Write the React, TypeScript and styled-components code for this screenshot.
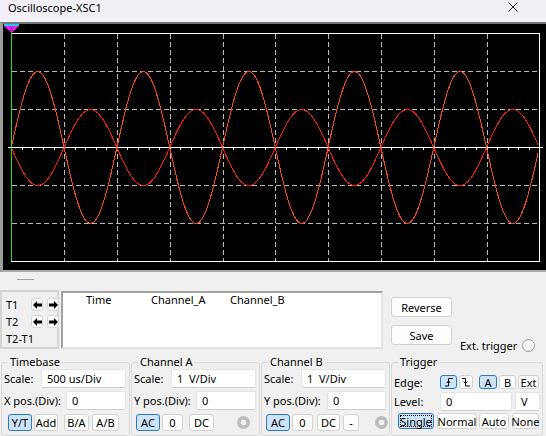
import React from 'react';
import styled, { createGlobalStyle } from 'styled-components';

// === GLOBAL ===
const GlobalStyle = createGlobalStyle`
  html, body { margin: 0; padding: 0; background: #f0f0f0; }
  body { font-family: "Noto Sans", "Liberation Sans", sans-serif; font-size: 11px; color: #000; }
`;

// === STYLED COMPONENTS ===
const Window = styled.div`
  width: 546px; height: 436px; overflow: hidden;
  display: flex; flex-direction: column; background: #f0f0f0;
`;
const TitleBar = styled.div`
  height: 22px; flex-shrink: 0; background: #f2eff6;
  display: flex; align-items: flex-start; justify-content: space-between;
  padding: 0 28px 0 8px; box-sizing: border-box; line-height: 15px; font-size: 11px;
`;
const CloseIcon = styled.svg` margin-top: 2px; `;
const Screen = styled.div`
  height: 250px; flex-shrink: 0; box-sizing: border-box; background: #000;
  border-top: 2px solid #767676; border-left: 3px solid #9c9c9c;
  border-bottom: 2px solid #a9a9a9;
  svg { display: block; }
`;
const Panel = styled.div` flex: 1; padding-top: 7px; `;
const Handle = styled.div` margin-left: 17px; width: 17px; height: 1px; background: #a0a0a0; margin-bottom: 10px; `;
const TopRow = styled.div` display: flex; align-items: flex-start; height: 59px; `;
const CursorBox = styled.div`
  box-sizing: border-box; width: 59px; height: 59px;
  border: 2px solid #d4d4d4; padding: 6px 0 0 4px;
  display: grid; grid-template-columns: 21px 12px 12px; grid-template-rows: 13px 13px 14px;
  column-gap: 4px; row-gap: 4px; align-items: center;
`;
const CursorLabel = styled.span<{ $span?: boolean }>`
  line-height: 14px; ${p => p.$span ? 'grid-column: 1 / span 3;' : ''}
`;
const ArrowBtn = styled.div`
  box-sizing: border-box; width: 12px; height: 13px; background: #fdfdfd;
  border: 1px solid #d6d6d6; border-radius: 3px;
  display: flex; align-items: center; justify-content: center;
`;
const Table = styled.div`
  box-sizing: border-box; width: 322px; height: 58px; margin-left: 2px; margin-top: 1px;
  background: #fff; border: 2px solid; border-color: #a3a3a3 #e3e3e3 #e3e3e3 #a3a3a3;
  display: grid; grid-template-columns: 65px 79px auto; align-content: start;
  padding-left: 23px; line-height: 13px;
`;
const SideButtons = styled.div`
  display: flex; flex-direction: column; gap: 8px; margin-left: 8px; padding-top: 7px;
`;
const ExtTrigger = styled.div`
  display: flex; align-items: center; gap: 5px; margin-left: 8px; margin-top: 49px; height: 13px;
`;
const Radio = styled.div`
  box-sizing: border-box; width: 13px; height: 13px; border-radius: 50%;
  border: 1px solid #9a9a9a; background: #f6f6f6;
`;
const DimRadio = styled.div<{ $ml: number }>`
  width: 13px; height: 13px; border-radius: 50%; margin-left: ${p => p.$ml}px; flex-shrink: 0;
  background: radial-gradient(circle, #f2f2f2 0 2.5px, #bcbcbc 3.2px);
`;
const GroupRow = styled.div` display: flex; gap: 1px; padding-left: 1px; margin-top: 6px; `;
const Group = styled.fieldset<{ $w: number }>`
  box-sizing: border-box; width: ${p => p.$w}px; height: 81px; min-width: 0;
  margin: 0; padding: 0 0 0 2px; border: 1px solid #dadada; border-radius: 3px;
`;
const Legend = styled.legend` margin-left: 4px; padding: 0 2px; line-height: 14px; `;
const Row = styled.div<{ $mt?: number; $h?: number }>`
  display: flex; align-items: center; height: ${p => p.$h ?? 19}px;
  margin-top: ${p => p.$mt ?? 0}px; padding-right: 3px;
`;
const Label = styled.span<{ $w?: number }>`
  ${p => p.$w ? `width: ${p.$w}px; flex-shrink: 0;` : ''} white-space: nowrap;
`;
const Field = styled.div<{ $w: number; $ml?: number }>`
  box-sizing: border-box; width: ${p => p.$w}px; height: 19px; flex-shrink: 0;
  margin-left: ${p => p.$ml !== undefined ? `${p.$ml}px` : 'auto'};
  background: #fff; border: 1px solid #e4e4e4; border-bottom-color: #cfcfcf; border-radius: 2px;
  padding-left: 5px; display: flex; align-items: center; white-space: pre;
`;
const Btn = styled.button<{ $w: number; $ml?: number; $h?: number; $on?: boolean; $focus?: boolean }>`
  box-sizing: border-box; flex-shrink: 0;
  width: ${p => p.$w}px; height: ${p => p.$h ?? 17}px; margin-left: ${p => p.$ml ?? 0}px;
  padding: 0; font: inherit; line-height: 1; color: #000;
  background: ${p => p.$on ? '#cce4f7' : '#fdfdfd'};
  border: 1px solid ${p => p.$on ? '#2f78bc' : '#d2d2d2'};
  border-radius: 3px;
  display: flex; align-items: center; justify-content: center;
  outline: ${p => p.$focus ? '1px dotted #000' : 'none'}; outline-offset: -3px;
`;

// === SCOPE DRAWING ===
const GX0 = 11.3;
const GX1 = 539.3;
const GY0 = 33;
const GY1 = 261;
const DX = 52.8;
const DY = 38;
const CY = 147;
const px = (v: number) => Math.round(v) + 0.5;

const wave = (amp: number) => {
  const pts: string[] = [];
  for (let x = 12; x <= 538; x += 1) {
    const th = (2 * Math.PI * (x - GX0)) / (2 * DX);
    pts.push(`${x},${(CY + 0.5 - amp * Math.sin(th)).toFixed(1)}`);
  }
  return pts.join(' ');
};

const Scope: React.FC = () => {
  const vlines = Array.from({ length: 9 }, (_, i) => px(GX0 + DX * (i + 1)));
  const hlines = [1, 2, 4, 5].map(k => px(GY0 + DY * k));
  const ticks = Array.from({ length: 51 }, (_, i) => px(GX0 + (DX / 5) * i));
  return (
    <svg width={543} height={246} viewBox="3 24 543 246">
      <g stroke="#b9b9b9" strokeWidth={1} strokeDasharray="5 3" shapeRendering="crispEdges">
        {vlines.map(x => <line key={'v' + x} x1={x} y1={GY0 + 1} x2={x} y2={GY1} />)}
        {hlines.map(y => <line key={'h' + y} x1={px(GX0)} y1={y} x2={px(GX1)} y2={y} />)}
      </g>
      <rect x={px(GX0)} y={px(GY0)} width={Math.round(GX1 - GX0)} height={GY1 - GY0}
        fill="none" stroke="#fff" strokeWidth={1} shapeRendering="crispEdges" />
      <g stroke="#fff" shapeRendering="crispEdges">
        <line x1={8} y1={CY + 0.5} x2={543} y2={CY + 0.5} strokeWidth={1} />
        {ticks.map(x => <line key={'t' + x} x1={x} y1={CY + 1} x2={x} y2={CY + 3} strokeWidth={1} />)}
      </g>
      <polyline points={wave(-38)} fill="none" stroke="#ff1a0a" strokeWidth={1} shapeRendering="crispEdges" />
      <polyline points={wave(76)} fill="none" stroke="#ff4a12" strokeWidth={1} shapeRendering="crispEdges" />
      <line x1={11.5} y1={30} x2={11.5} y2={GY1} stroke="#1ee01e" strokeWidth={1} shapeRendering="crispEdges" />
      <rect x={4} y={24} width={15} height={2} fill="#1ecbf0" />
      <polygon points="4,26 19,26 11.5,33" fill="#f01cf0" />
      <text x={11.5} y={31} fontSize={6} fontFamily="Liberation Sans, sans-serif" textAnchor="middle" fill="#000">1</text>
    </svg>
  );
};

// === ICONS ===
const ArrowIcon: React.FC<{ dir: 'l' | 'r' }> = ({ dir }) => (
  <svg width={9} height={8} viewBox="0 0 9 8" style={dir === 'r' ? { transform: 'scaleX(-1)' } : undefined}>
    <path d="M0 4 L4 0 L4 2.5 L9 2.5 L9 5.5 L4 5.5 L4 8 Z" fill="#000" />
  </svg>
);
const EdgeIcon: React.FC<{ rise?: boolean }> = ({ rise }) => (
  <svg width={10} height={10} viewBox="0 0 10 10">
    {rise ? (
      <>
        <path d="M1 9 H4.5 V1.5 H9" fill="none" stroke="#000" strokeWidth={1} />
        <path d="M2.8 6 L4.5 3.8 L6.2 6" fill="none" stroke="#000" strokeWidth={1} />
      </>
    ) : (
      <>
        <path d="M1 1.5 H4.5 V9 H9" fill="none" stroke="#000" strokeWidth={1} />
        <path d="M2.8 4.5 L4.5 6.7 L6.2 4.5" fill="none" stroke="#000" strokeWidth={1} />
      </>
    )}
  </svg>
);

const App: React.FC = () => {
  return (
    <Window>
      <GlobalStyle />
      <TitleBar>
        <span>Oscilloscope-XSC1</span>
        <CloseIcon width={10} height={10} viewBox="0 0 10 10">
          <path d="M0.5 0.5 L9.5 9.5 M9.5 0.5 L0.5 9.5" stroke="#222" strokeWidth={1} />
        </CloseIcon>
      </TitleBar>

      <Screen><Scope /></Screen>

      <Panel>
        <Handle />
        <TopRow>
          <CursorBox>
            <CursorLabel>T1</CursorLabel>
            <ArrowBtn><ArrowIcon dir="l" /></ArrowBtn>
            <ArrowBtn><ArrowIcon dir="r" /></ArrowBtn>
            <CursorLabel>T2</CursorLabel>
            <ArrowBtn><ArrowIcon dir="l" /></ArrowBtn>
            <ArrowBtn><ArrowIcon dir="r" /></ArrowBtn>
            <CursorLabel $span>T2-T1</CursorLabel>
          </CursorBox>
          <Table>
            <span>Time</span>
            <span>Channel_A</span>
            <span>Channel_B</span>
          </Table>
          <SideButtons>
            <Btn $w={61} $h={20}>Reverse</Btn>
            <Btn $w={61} $h={20}>Save</Btn>
          </SideButtons>
          <ExtTrigger>
            <span>Ext. trigger</span>
            <Radio />
          </ExtTrigger>
        </TopRow>

        <GroupRow>
          <Group $w={129}>
            <Legend>Timebase</Legend>
            <Row>
              <Label>Scale:</Label>
              <Field $w={85}>500 us/Div</Field>
            </Row>
            <Row $mt={3}>
              <Label>X pos.(Div):</Label>
              <Field $w={60}>0</Field>
            </Row>
            <Row $mt={4} $h={17}>
              <Btn $w={24} $ml={4} $on>Y/T</Btn>
              <Btn $w={24} $ml={2}>Add</Btn>
              <Btn $w={25} $ml={6}>B/A</Btn>
              <Btn $w={27} $ml={3}>A/B</Btn>
            </Row>
          </Group>

          <Group $w={129}>
            <Legend>Channel A</Legend>
            <Row>
              <Label>Scale:</Label>
              <Field $w={85}>1  V/Div</Field>
            </Row>
            <Row $mt={3}>
              <Label>Y pos.(Div):</Label>
              <Field $w={60}>0</Field>
            </Row>
            <Row $mt={4} $h={17}>
              <Btn $w={24} $ml={2} $on>AC</Btn>
              <Btn $w={21} $ml={2}>0</Btn>
              <Btn $w={25} $ml={6}>DC</Btn>
              <DimRadio $ml={23} />
            </Row>
          </Group>

          <Group $w={129}>
            <Legend>Channel B</Legend>
            <Row>
              <Label>Scale:</Label>
              <Field $w={85}>1  V/Div</Field>
            </Row>
            <Row $mt={3}>
              <Label>Y pos.(Div):</Label>
              <Field $w={59}>0</Field>
            </Row>
            <Row $mt={4} $h={17}>
              <Btn $w={24} $ml={2} $on>AC</Btn>
              <Btn $w={21} $ml={2}>0</Btn>
              <Btn $w={23} $ml={4}>DC</Btn>
              <Btn $w={16} $ml={3}>-</Btn>
              <DimRadio $ml={16} />
            </Row>
          </Group>

          <Group $w={152}>
            <Legend>Trigger</Legend>
            <Row $mt={6} $h={14}>
              <Label $w={46}>Edge:</Label>
              <Btn $w={17} $h={14} $on><EdgeIcon rise /></Btn>
              <Btn $w={14} $h={14} $ml={2}><EdgeIcon /></Btn>
              <Btn $w={18} $h={14} $ml={6} $on>A</Btn>
              <Btn $w={17} $h={14} $ml={2}>B</Btn>
              <Btn $w={21} $h={14} $ml={2}>Ext</Btn>
            </Row>
            <Row $mt={3}>
              <Label $w={46}>Level:</Label>
              <Field $w={72} $ml={0}>0</Field>
              <Field $w={25} $ml={3}>V</Field>
            </Row>
            <Row $mt={2} $h={16}>
              <Btn $w={36} $h={16} $ml={4} $on $focus>Single</Btn>
              <Btn $w={40} $h={16} $ml={3}>Normal</Btn>
              <Btn $w={30} $h={16} $ml={2}>Auto</Btn>
              <Btn $w={27} $h={16} $ml={3}>None</Btn>
            </Row>
          </Group>
        </GroupRow>
      </Panel>
    </Window>
  );
};

export default App;
